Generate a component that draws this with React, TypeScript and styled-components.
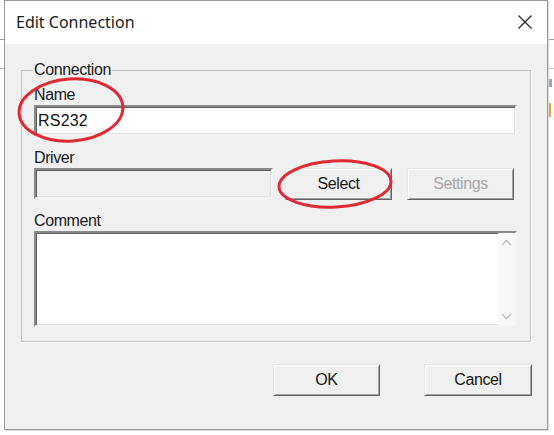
import React from "react";
import styled, { createGlobalStyle } from "styled-components";

const Global = createGlobalStyle`
  html, body { margin: 0; padding: 0; background: #ffffff; }
  * { box-sizing: border-box; }
`;

const Page = styled.div`
  position: relative;
  width: 554px;
  height: 435px;
  overflow: hidden;
  background:
    linear-gradient(#9a9a9a, #9a9a9a) 0 39px / 100% 1px no-repeat,
    linear-gradient(#c4c4c4, #c4c4c4) 0 68px / 100% 1px no-repeat,
    linear-gradient(#8ea8c6, #8ea8c6) 549px 79px / 3px 8px no-repeat,
    linear-gradient(#e5a23e, #e5a23e) 549px 103px / 2px 14px no-repeat,
    #ffffff;
  font-family: "Liberation Sans", Arial, sans-serif;
`;

const Dialog = styled.div`
  margin-left: 4px;
  width: 544px;
  height: 430px;
  border: 1px solid #9a9a9a;
  box-shadow: 1px 1px 0 #dcdcdc;
  display: flex;
  flex-direction: column;
  background: #f0f0f0;
`;

const TitleBar = styled.div`
  height: 43px;
  flex: none;
  background: #ffffff;
  display: flex;
  align-items: center;
  padding-left: 11px;
`;

const Title = styled.div`
  flex: 1;
  font-family: "Noto Sans", "Segoe UI", sans-serif;
  font-size: 16px;
  color: #1b1b1b;
  padding-bottom: 1px;
`;

const CloseButton = styled.div`
  width: 44px;
  height: 43px;
  display: flex;
  align-items: center;
  justify-content: center;
  padding-bottom: 1px;
`;

const Body = styled.div`
  flex: 1;
  display: flex;
  flex-direction: column;
  padding: 17px 16px 0 16px;
`;

const Group = styled.fieldset`
  margin: 0;
  padding: 7px 13px 14px 12px;
  border: 1px solid #c2c2c2;
  box-shadow: 1px 1px 0 #ffffff;
  display: flex;
  flex-direction: column;
`;

const Legend = styled.legend`
  padding: 0 1px;
  margin-left: -1px;
  font-size: 16px;
  line-height: 18px;
  letter-spacing: -0.4px;
  color: #1a1a1a;
`;

const Label = styled.div<{ $gap?: number }>`
  margin-top: ${(p) => p.$gap ?? 0}px;
  font-size: 16px;
  line-height: 18px;
  letter-spacing: -0.4px;
  color: #1a1a1a;
  height: 18px;
  margin-bottom: 1px;
`;

const sunken = `
  border-style: solid;
  border-width: 2px;
  border-color: #8a8a8a #f4f4f4 #f4f4f4 #8a8a8a;
  box-shadow: inset 1px 1px 0 #5e5e5e, inset -1px -1px 0 #e0e0e0;
`;

const TextInput = styled.input<{ $width?: number; $disabled?: boolean }>`
  ${sunken}
  width: ${(p) => (p.$width ? `${p.$width}px` : "100%")};
  height: 31px;
  margin: 0;
  padding: 0 2px;
  background: ${(p) => (p.$disabled ? "#f0f0f0" : "#ffffff")};
  font-family: "Liberation Sans", Arial, sans-serif;
  font-size: 16px;
  letter-spacing: 0.2px;
  color: #111;
  outline: none;
`;

const DriverRow = styled.div`
  display: flex;
  align-items: flex-start;
`;

const Button = styled.button<{ $width: number; $gap?: number; $disabled?: boolean }>`
  width: ${(p) => p.$width}px;
  height: 32px;
  margin: 0 0 0 ${(p) => p.$gap ?? 0}px;
  padding: 0 0 1px 0;
  background: #f0f0f0;
  border-style: solid;
  border-width: 1px;
  border-color: #e6e6e6 #616161 #616161 #e6e6e6;
  box-shadow: inset 1px 1px 0 #ffffff, inset -1px -1px 0 #a3a3a3;
  font-family: "Liberation Sans", Arial, sans-serif;
  font-size: 16px;
  letter-spacing: -0.4px;
  color: ${(p) => (p.$disabled ? "#a6a6a6" : "#161616")};
`;

const CommentBox = styled.div`
  ${sunken}
  height: 96px;
  background: #ffffff;
  display: flex;
`;

const CommentText = styled.div`
  flex: 1;
`;

const ScrollBar = styled.div`
  width: 17px;
  background: #f8f8f8;
  display: flex;
  flex-direction: column;
  justify-content: space-between;
  align-items: center;
  padding: 6px 0 5px;
`;

const ButtonRow = styled.div`
  display: flex;
  justify-content: flex-end;
  margin-top: 22px;
  margin-right: -1px;
`;

const Annotation = styled.svg<{ $left: number; $top: number }>`
  position: absolute;
  left: ${(p) => p.$left}px;
  top: ${(p) => p.$top}px;
  overflow: visible;
  pointer-events: none;
`;

const Chevron = ({ up }: { up?: boolean }) => (
  <svg width="11" height="7" viewBox="0 0 11 7">
    <path
      d={up ? "M1 6 L5.5 1.5 L10 6" : "M1 1 L5.5 5.5 L10 1"}
      fill="none"
      stroke="#bdbdbd"
      strokeWidth="1.3"
    />
  </svg>
);

export default function App() {
  return (
    <Page>
      <Global />
      <Dialog>
        <TitleBar>
          <Title>Edit Connection</Title>
          <CloseButton>
            <svg width="14" height="14" viewBox="0 0 14 14">
              <path d="M0.5 0.5 L13.5 13.5 M13.5 0.5 L0.5 13.5" stroke="#222" strokeWidth="1.2" />
            </svg>
          </CloseButton>
        </TitleBar>
        <Body>
          <Group>
            <Legend>Connection</Legend>
            <Label>Name</Label>
            <TextInput readOnly value="RS232" />
            <Label $gap={13}>Driver</Label>
            <DriverRow>
              <TextInput readOnly value="" $width={239} $disabled />
              <Button $width={107} $gap={12}>Select</Button>
              <Button $width={107} $gap={15} $disabled>Settings</Button>
            </DriverRow>
            <Label $gap={12}>Comment</Label>
            <CommentBox>
              <CommentText />
              <ScrollBar>
                <Chevron up />
                <Chevron />
              </ScrollBar>
            </CommentBox>
          </Group>
          <ButtonRow>
            <Button $width={107}>OK</Button>
            <Button $width={108} $gap={44}>Cancel</Button>
          </ButtonRow>
        </Body>
      </Dialog>
      <Annotation $left={16} $top={76} width="112" height="68" viewBox="0 0 112 68">
        <ellipse cx="55" cy="34" rx="52" ry="31" fill="none" stroke="#e02a33" strokeWidth="3" transform="rotate(-4 55 34)" />
      </Annotation>
      <Annotation $left={276} $top={158} width="120" height="52" viewBox="0 0 120 52">
        <ellipse cx="59" cy="26" rx="56" ry="23" fill="none" stroke="#e02a33" strokeWidth="3" transform="rotate(-3 59 26)" />
      </Annotation>
    </Page>
  );
}
